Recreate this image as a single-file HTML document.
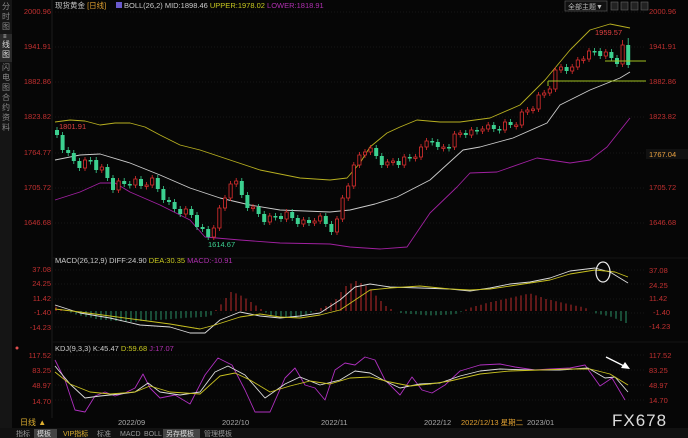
<!DOCTYPE html>
<html><head><meta charset="utf-8"><style>
html,body{margin:0;padding:0;background:#050505;width:688px;height:438px;overflow:hidden}
svg{display:block}
text{font-family:"Liberation Sans","Noto Sans CJK SC",sans-serif}
</style></head><body>
<svg width="688" height="438" viewBox="0 0 688 438" xmlns="http://www.w3.org/2000/svg">
<rect width="688" height="438" fill="#060606"/>
<rect x="0" y="0" width="12" height="428" fill="#151515"/>
<rect x="0" y="34" width="12" height="28" fill="#2a2a2a"/>
<g font-size="8" fill="#888">
<text x="2" y="9">分</text><text x="2" y="19">时</text><text x="2" y="29">图</text>
<text x="2" y="47" fill="#ddd">线</text><text x="2" y="57" fill="#ddd">图</text><text x="3" y="38" font-size="6" fill="#ddd">≡</text>
<text x="2" y="70">闪</text><text x="2" y="80">电</text><text x="2" y="90">图</text>
<text x="2" y="100">合</text><text x="2" y="110">约</text><text x="2" y="120">资</text><text x="2" y="130">料</text>
</g>
<line x1="52" y1="0" x2="52" y2="418" stroke="#1c1c1c"/>
<g stroke="#141414"><line x1="52" y1="258" x2="688" y2="258"/><line x1="52" y1="342" x2="688" y2="342"/></g>
<g stroke="#151515" stroke-dasharray="1 2">
<line x1="52" y1="12" x2="646" y2="12"/><line x1="52" y1="47" x2="646" y2="47"/><line x1="52" y1="82" x2="646" y2="82"/><line x1="52" y1="117" x2="646" y2="117"/><line x1="52" y1="153" x2="646" y2="153"/><line x1="52" y1="188" x2="646" y2="188"/><line x1="52" y1="223" x2="646" y2="223"/>
<line x1="52" y1="270" x2="646" y2="270"/><line x1="52" y1="284" x2="646" y2="284"/><line x1="52" y1="299" x2="646" y2="299"/><line x1="52" y1="313" x2="646" y2="313"/><line x1="52" y1="327" x2="646" y2="327"/>
<line x1="52" y1="355" x2="646" y2="355"/><line x1="52" y1="370" x2="646" y2="370"/><line x1="52" y1="385" x2="646" y2="385"/><line x1="52" y1="400" x2="646" y2="400"/>
</g>
<text x="55" y="8" font-size="7.5" fill="#ccc">现货黄金 <tspan fill="#e0a030">[日线]</tspan></text>
<rect x="116" y="2" width="6" height="6" fill="#6a5acd"/>
<text x="124" y="8" font-size="7.5" fill="#ccc">BOLL(26,2) MID:1898.46 <tspan fill="#c8c820">UPPER:1978.02</tspan> <tspan fill="#b030b0">LOWER:1818.91</tspan></text>
<rect x="565" y="1" width="42" height="10" fill="#111" stroke="#555" stroke-width=".7"/>
<text x="568" y="9" font-size="7" fill="#bbb">全部主题▼</text>
<g fill="#222" stroke="#666" stroke-width=".6"><rect x="611" y="2" width="7" height="8"/><rect x="621" y="2" width="7" height="8"/><rect x="631" y="2" width="7" height="8"/><rect x="641" y="2" width="7" height="8"/></g>
<g font-size="7.5" fill="#c03030">
<text x="649" y="14">2000.96</text><text x="649" y="49">1941.91</text><text x="649" y="84">1882.86</text><text x="649" y="119">1823.82</text>
<text x="649" y="190">1705.72</text><text x="649" y="225">1646.68</text>
<text x="649" y="273">37.08</text><text x="649" y="288">24.25</text><text x="649" y="301">11.42</text><text x="653" y="315">-1.40</text><text x="649" y="329">-14.23</text>
<text x="649" y="358">117.52</text><text x="649" y="373">83.25</text><text x="649" y="388">48.97</text><text x="649" y="403">14.70</text>
</g>
<rect x="646" y="149" width="42" height="10" fill="#111"/>
<text x="649" y="157" font-size="7.5" fill="#e8a040">1767.04</text>
<g font-size="7.5" fill="#c03030" text-anchor="end">
<text x="51" y="14">2000.96</text><text x="51" y="49">1941.91</text><text x="51" y="84">1882.86</text><text x="51" y="119">1823.82</text>
<text x="51" y="155">1764.77</text><text x="51" y="190">1705.72</text><text x="51" y="225">1646.68</text>
<text x="51" y="272">37.08</text><text x="51" y="286">24.25</text><text x="51" y="301">11.42</text><text x="51" y="315">-1.40</text><text x="51" y="330">-14.23</text>
<text x="51" y="358">117.52</text><text x="51" y="373">83.25</text><text x="51" y="388">48.97</text><text x="51" y="404">14.70</text>
</g>
<circle cx="17" cy="348" r="1.5" fill="#e05050"/>

<polyline fill="none" stroke="#b8b020" stroke-width=".9" stroke-linejoin="round" points="55,122 70,120 85,121 100,125 115,123 130,123 145,127 160,135 180,145 200,150 230,160 260,170 300,178 330,180 347,178 360,163 370,147 387,133 400,127 417,120 440,122 460,122 490,118 520,105 545,80 570,50 590,30 610,24 630,28"/>
<polyline fill="none" stroke="#ccc" stroke-width=".9" stroke-linejoin="round" points="55,160 80,155 100,154 130,163 160,175 190,188 220,198 250,205 280,210 330,212 350,210 375,204 397,197 430,180 463,150 480,147 513,138 547,123 560,105 590,90 620,78 630,72"/>
<polyline fill="none" stroke="#a020a0" stroke-width=".9" stroke-linejoin="round" points="55,200 80,192 100,183 115,183 130,192 160,205 190,220 205,237 240,240 280,243 330,244 350,247 380,249 407,247 430,213 457,187 470,173 497,172 537,158 570,163 590,160 607,147 630,118"/>

<path stroke="#3cd090" stroke-width=".8" fill="none" d="M57 127v11M62.6 132v21M68.2 147v9M73.8 150v14M79.4 158v13M90.6 157v7.5M96.2 157v16M107.4 164v17M113 175v18M124.2 178v9M129.8 181v7.5M141 176v13M157.8 175v17M163.4 186v17M169 197v8M174.6 199v13M180.2 206v11M191.4 206v12M197 212v18M202.6 224v8M208.2 226v14M241.8 178v20M247.4 192v19M258.6 204v13M264.2 211v14M275.4 213v7.5M281 213v9M292.2 209v12M297.8 215v12M309 217v9M325.8 213v14M331.4 221v14M376.2 145v14M381.8 153v15M398.6 158v10M409.8 154v7.5M432.2 138v7.5M437.8 139v11M449 144v7.5M465.8 130v8M477 127v7.5M493.8 122v10M499.4 126v7.5M510.6 119v9M566.6 64v10M594.6 48v7.5M600.2 48v11M611.4 49v12M617 55v12M628.2 38v30"/>
<path fill="#3cd090" d="M55 130h4v5h-4zM60.6 135h4v15h-4zM66.2 150h4v3h-4zM71.8 153h4v8h-4zM77.4 161h4v7h-4zM88.6 160h4v1.5h-4zM94.2 160h4v10h-4zM105.4 167h4v11h-4zM111 178h4v12h-4zM122.2 181h4v3h-4zM127.8 184h4v1.5h-4zM139 179h4v7h-4zM155.8 178h4v11h-4zM161.4 189h4v11h-4zM167 200h4v2h-4zM172.6 202h4v7h-4zM178.2 209h4v5h-4zM189.4 209h4v6h-4zM195 215h4v12h-4zM200.6 227h4v2h-4zM206.2 229h4v8h-4zM239.8 181h4v14h-4zM245.4 195h4v13h-4zM256.6 207h4v7h-4zM262.2 214h4v8h-4zM273.4 216h4v1.5h-4zM279 216h4v3h-4zM290.2 212h4v6h-4zM295.8 218h4v6h-4zM307 220h4v3h-4zM323.8 216h4v8h-4zM329.4 224h4v8h-4zM374.2 148h4v8h-4zM379.8 156h4v9h-4zM396.6 161h4v4h-4zM407.8 157h4v1.5h-4zM430.2 141h4v1.5h-4zM435.8 142h4v5h-4zM447 147h4v1.5h-4zM463.8 133h4v2h-4zM475 130h4v1.5h-4zM491.8 125h4v4h-4zM497.4 129h4v1.5h-4zM508.6 122h4v3h-4zM564.6 67h4v4h-4zM592.6 51h4v1.5h-4zM598.2 51h4v5h-4zM609.4 52h4v6h-4zM615 58h4v6h-4zM626.2 45h4v20h-4z"/>
<path stroke="#e03030" stroke-width=".8" fill="none" d="M85 157v14M101.8 164v9M118.6 178v15M135.4 176v12M146.6 182v7.5M152.2 175v13M185.8 206v11M213.8 225v15M219.4 205v26M225 195v16M230.6 181v20M236.2 178v9M253 204v7.5M269.8 213v12M286.6 209v13M303.4 217v10M314.6 218v8M320.2 213v11M337 216v19M342.6 195v27M348.2 183v18M353.8 162v27M359.4 152v16M365 149v9M370.6 145v10M387.4 159v9M393 158v7.5M404.2 154v14M415.4 154v7.5M421 144v16M426.6 138v12M443.4 144v7.5M454.6 131v19M460.2 130v7.5M471.4 127v11M482.6 126v8M488.2 122v10M505 119v14M516.2 122v7.5M521.8 109v19M527.4 107v8M533 106v7.5M538.6 92v20M544.2 90v8M549.8 86v10M555.4 67v25M561 64v9M572.2 64v10M577.8 57v13M583.4 56v7.5M589 48v14M605.8 49v10M622.6 40v27"/>
<path stroke="#e03030" stroke-width=".8" fill="#060606" d="M83.4 160h3.2v8h-3.2zM100.2 167h3.2v3h-3.2zM117 181h3.2v9h-3.2zM133.8 179h3.2v6h-3.2zM145 185h3.2v1.5h-3.2zM150.6 178h3.2v7h-3.2zM184.2 209h3.2v5h-3.2zM212.2 228h3.2v9h-3.2zM217.8 208h3.2v20h-3.2zM223.4 198h3.2v10h-3.2zM229 184h3.2v14h-3.2zM234.6 181h3.2v3h-3.2zM251.4 207h3.2v1.5h-3.2zM268.2 216h3.2v6h-3.2zM285 212h3.2v7h-3.2zM301.8 220h3.2v4h-3.2zM313 221h3.2v2h-3.2zM318.6 216h3.2v5h-3.2zM335.4 219h3.2v13h-3.2zM341 198h3.2v21h-3.2zM346.6 186h3.2v12h-3.2zM352.2 165h3.2v21h-3.2zM357.8 155h3.2v10h-3.2zM363.4 152h3.2v3h-3.2zM369 148h3.2v4h-3.2zM385.8 162h3.2v3h-3.2zM391.4 161h3.2v1.5h-3.2zM402.6 157h3.2v8h-3.2zM413.8 157h3.2v1.5h-3.2zM419.4 147h3.2v10h-3.2zM425 141h3.2v6h-3.2zM441.8 147h3.2v1.5h-3.2zM453 134h3.2v13h-3.2zM458.6 133h3.2v1.5h-3.2zM469.8 130h3.2v5h-3.2zM481 129h3.2v2h-3.2zM486.6 125h3.2v4h-3.2zM503.4 122h3.2v8h-3.2zM514.6 125h3.2v1.5h-3.2zM520.2 112h3.2v13h-3.2zM525.8 110h3.2v2h-3.2zM531.4 109h3.2v1.5h-3.2zM537 95h3.2v14h-3.2zM542.6 93h3.2v2h-3.2zM548.2 89h3.2v4h-3.2zM553.8 70h3.2v19h-3.2zM559.4 67h3.2v3h-3.2zM570.6 67h3.2v4h-3.2zM576.2 60h3.2v7h-3.2zM581.8 59h3.2v1.5h-3.2zM587.4 51h3.2v8h-3.2zM604.2 52h3.2v4h-3.2zM621 45h3.2v19h-3.2z"/>
<line x1="548" y1="81" x2="646" y2="81" stroke="#a0c020"/><line x1="548" y1="81" x2="548" y2="86" stroke="#a0c020"/>
<line x1="605" y1="61" x2="646" y2="61" stroke="#a0c020"/>

<path stroke="#d03030" stroke-width=".9" d="M56 311V306.6M61 311V309M66 311V310.4M216 311V310M221 311V304.4M226 311V298M231 311V292M236 311V293.4M241 311V295.6M246 311V298.5M251 311V302M256 311V305.5M261 311V309M316 311V310.5M321 311V308M326 311V306M331 311V302.7M336 311V299M341 311V292M346 311V286M351 311V283.5M356 311V281M361 311V283M366 311V286M371 311V290M376 311V295.6M381 311V301M386 311V306M391 311V309M466 311V309.5M471 311V307.5M476 311V306M481 311V304.7M486 311V303.3M491 311V302M496 311V301M501 311V299.8M506 311V298.7M511 311V297.6M516 311V296.5M521 311V295.4M526 311V294.3M531 311V293.7M536 311V295.4M541 311V297M546 311V299M551 311V300M556 311V301.3M561 311V302.4M566 311V303.5M571 311V304.6M576 311V305.7M581 311V306.8M586 311V308.3"/>
<path stroke="#30a070" stroke-width=".9" d="M71 311V312.6M76 311V314.5M81 311V315.8M86 311V316.7M91 311V317.6M96 311V319M101 311V319.8M106 311V320M111 311V320.6M116 311V321M121 311V321.3M126 311V321.7M131 311V322M136 311V321.6M141 311V321M146 311V321M151 311V320.5M156 311V320M161 311V319.8M166 311V319.4M171 311V319M176 311V318.6M181 311V318.3M186 311V317.8M191 311V317.6M196 311V317.4M201 311V317M206 311V316.7M211 311V315.4M266 311V312.6M271 311V315.4M276 311V316M281 311V316.5M286 311V317M291 311V317M296 311V317.6M301 311V317M306 311V315M311 311V312.6M401 311V313M406 311V313.6M411 311V314M416 311V314.3M421 311V314.7M426 311V315.2M431 311V315.4M436 311V315.2M441 311V315M446 311V314.7M451 311V314.5M456 311V313.9M461 311V311.7M596 311V313.4M601 311V314.5M606 311V315.6M611 311V316.8M616 311V318.7M621 311V321M626 311V323"/>
<polyline fill="none" stroke="#ddd" stroke-width=".9" stroke-linejoin="round" points="55,305 80,313 110,318 140,325 170,327 190,333 205,333 220,320 240,312 260,316 280,318 300,316 320,313 340,300 355,287 370,284 390,287 420,288 450,289 470,291 490,288 510,284 530,282 550,278 570,271 595,268 610,272 628,283"/>
<polyline fill="none" stroke="#c8c020" stroke-width=".9" stroke-linejoin="round" points="55,309 80,312 110,316 140,320 170,324 200,329 215,325 240,317 260,314 280,317 300,318 320,315 340,310 355,300 370,290 390,288 420,286 450,289 470,290 490,289 510,286 530,283 550,280 570,274 595,270 615,272 628,277"/>
<polyline fill="none" stroke="#b030c0" stroke-width=".9" stroke-linejoin="round" points="55,360 65,380 75,410 85,412 95,396 105,392 115,396 125,393 135,388 143,374 150,388 160,398 175,395 190,404 205,375 218,358 232,365 245,390 255,412 270,412 285,378 295,368 305,385 315,388 325,400 335,370 345,363 355,365 365,357 375,360 385,380 400,395 412,377 422,390 432,393 445,385 460,371 480,365 500,364 515,367 535,370 550,369 570,368 585,365 600,386 612,378 625,400"/>
<polyline fill="none" stroke="#ddd" stroke-width=".9" stroke-linejoin="round" points="55,366 70,384 85,398 100,396 120,394 135,392 148,383 160,392 180,395 200,392 215,372 228,366 245,375 265,398 285,384 300,377 320,385 340,380 355,371 370,373 385,381 400,388 420,384 440,383 460,376 480,371 500,369 530,370 560,370 588,368 605,378 615,377 628,392"/>
<polyline fill="none" stroke="#c8c020" stroke-width=".9" stroke-linejoin="round" points="55,372 70,384 90,392 110,394 135,392 150,386 170,392 200,394 220,376 235,373 250,380 270,392 290,386 310,381 330,384 350,378 370,377 390,382 410,386 430,384 450,381 480,374 510,371 540,370 570,369 590,369 610,374 628,385"/>

<text x="59" y="129" font-size="7.5" fill="#e04040">1801.91</text>
<text x="208" y="247" font-size="7.5" fill="#3cd090">1614.67</text>
<text x="595" y="35" font-size="7.5" fill="#e04040">1959.57</text>
<text x="55" y="263" font-size="7.5" fill="#ccc">MACD(26,12,9) DIFF:24.90 <tspan fill="#c8c820">DEA:30.35</tspan> <tspan fill="#b030b0">MACD:-10.91</tspan></text>
<text x="55" y="351" font-size="7.5" fill="#ccc">KDJ(9,3,3) K:45.47 <tspan fill="#c8c820">D:59.68</tspan> <tspan fill="#b030b0">J:17.07</tspan></text>
<ellipse cx="603" cy="272" rx="7" ry="10" fill="none" stroke="#eee" stroke-width="1.2"/>
<line x1="606" y1="357" x2="626" y2="367" stroke="#fff" stroke-width="1.3"/>
<polygon points="630,369 621,368 625,362" fill="#fff"/>
<g font-size="7.5" fill="#aaa">
<text x="118" y="425">2022/09</text><text x="222" y="425">2022/10</text><text x="321" y="425">2022/11</text><text x="424" y="425">2022/12</text>
<text x="461" y="425" fill="#e0a030">2022/12/13 星期二</text><text x="527" y="425">2023/01</text>
</g>
<text x="20" y="425" font-size="8" fill="#e0b030">日线 ▲</text>
<text x="612" y="426" font-size="17" fill="#ddd" letter-spacing="1">FX678</text>
<rect x="0" y="428" width="688" height="10" fill="#111"/>
<g font-size="7" fill="#999">
<text x="16" y="436">指标</text>
<rect x="34" y="429" width="23" height="9" fill="#444"/><text x="37" y="436" fill="#ddd">模板</text>
<text x="63" y="436" fill="#e0b030">VIP指标</text><text x="97" y="436">标准</text><text x="120" y="436">MACD</text><text x="144" y="436">BOLL</text>
<rect x="163" y="429" width="37" height="9" fill="#444"/><text x="166" y="436" fill="#ddd">另存模板</text><text x="204" y="436">管理模板</text>
</g>
</svg>
</body></html>
